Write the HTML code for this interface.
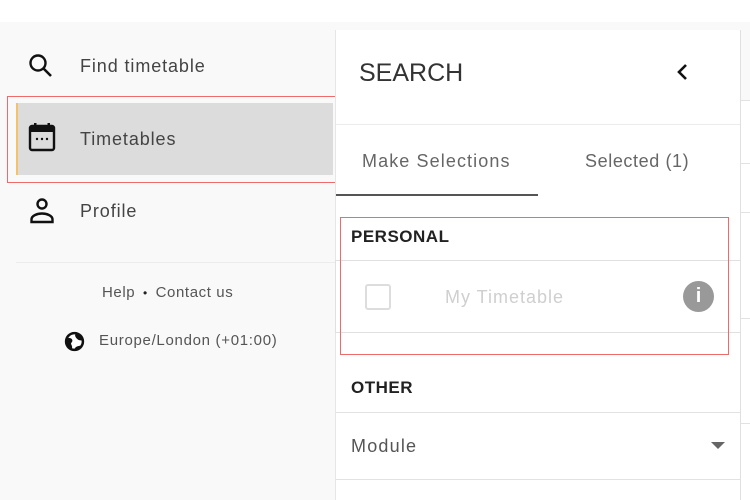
<!DOCTYPE html>
<html><head><meta charset="utf-8"><style>
*{margin:0;padding:0;box-sizing:border-box}
body{width:750px;height:500px;overflow:hidden;background:#fff;font-family:"Liberation Sans",sans-serif;position:relative}
.a{position:absolute;white-space:nowrap}
.side{left:16px;top:22px;width:319px;height:478px;background:#f9f9f9}
.nav{font-size:18px;color:#444;letter-spacing:0.9px}
.line{background:#e2e2e2;height:1px}
.panel{left:335px;top:30px;width:406px;height:470px;background:#fff;border-left:1px solid #e6e6e6;border-right:1px solid #e0e0e0}
</style></head><body>
<div class="a" style="left:0;top:22px;width:750px;height:478px;background:#f9f9f9"></div>
<div class="a side"></div>
<div class="a" style="left:741px;top:100px;width:9px;height:400px;background:#fff"></div>
<div class="a line" style="left:741px;top:100px;width:9px"></div>
<div class="a line" style="left:741px;top:163px;width:9px"></div>
<div class="a line" style="left:741px;top:212px;width:9px"></div>
<div class="a line" style="left:741px;top:318px;width:9px"></div>
<div class="a line" style="left:741px;top:423px;width:9px"></div>

<svg class="a" style="left:28px;top:53px" width="26" height="26" viewBox="0 0 26 26"><circle cx="10" cy="10" r="7.5" fill="none" stroke="#111" stroke-width="2.4"/><path d="M15.5 15.5L23 23" stroke="#111" stroke-width="2.6"/></svg>
<div class="a nav" style="left:80px;top:56px">Find timetable</div>

<div class="a" style="left:16px;top:103px;width:317px;height:72px;background:#dcdcdc;border-left:2px solid #f3c26b"></div>
<svg class="a" style="left:28px;top:122px" width="28" height="32" viewBox="0 0 28 32"><rect x="2" y="4" width="24" height="24" rx="2" fill="none" stroke="#111" stroke-width="2.4"/><rect x="2" y="4" width="24" height="6" fill="#111"/><rect x="6" y="1" width="2.5" height="5" fill="#111"/><rect x="19.5" y="1" width="2.5" height="5" fill="#111"/><circle cx="9" cy="17" r="1.2" fill="#111"/><circle cx="14" cy="17" r="1.2" fill="#111"/><circle cx="19" cy="17" r="1.2" fill="#111"/></svg>
<div class="a nav" style="left:80px;top:129px">Timetables</div>
<div class="a" style="left:7px;top:96px;width:336px;height:87px;border:1px solid #ef6b6b"></div>

<svg class="a" style="left:29px;top:197px" width="26" height="28" viewBox="0 0 26 28"><circle cx="13" cy="7" r="4.5" fill="none" stroke="#111" stroke-width="2.4"/><path d="M2.5 25v-2.5c0-4 6-6 10.5-6s10.5 2 10.5 6V25z" fill="none" stroke="#111" stroke-width="2.4"/></svg>
<div class="a nav" style="left:80px;top:201px">Profile</div>

<div class="a line" style="left:16px;top:262px;width:319px;background:#ececec"></div>
<div class="a" style="left:102px;top:284px;font-size:15px;color:#555;letter-spacing:0.6px">Help <span style="font-size:12px;color:#222;margin:0 3px">•</span> Contact us</div>
<svg class="a" style="left:64px;top:331px" width="21" height="21" viewBox="0 0 20 20"><circle cx="10" cy="10" r="8" fill="#fff" stroke="#111" stroke-width="2.4"/><path d="M3 7c2-1 5 0 5 2s-2 2-1 4 1 3 0 5C4 16 2 12 3 7zM11 3c3 0 6 3 6 6-3 0-4-1-5-2s-2-3-1-4zM10 17c1-2 3-3 6-3-1 2-3 3-6 3z" fill="#111"/></svg>
<div class="a" style="left:99px;top:332px;font-size:15px;color:#555;letter-spacing:0.7px">Europe/London (+01:00)</div>

<div class="a panel"></div>
<div class="a" style="left:359px;top:59px;font-size:25px;color:#333">SEARCH</div>
<svg class="a" style="left:675px;top:63px" width="14" height="18" viewBox="0 0 14 18"><path d="M11 2L4 9l7 7" fill="none" stroke="#111" stroke-width="2.6"/></svg>
<div class="a line" style="left:336px;top:124px;width:404px;background:#ececec"></div>
<div class="a" style="left:362px;top:151px;font-size:18px;color:#666;letter-spacing:1.1px">Make Selections</div>
<div class="a" style="left:585px;top:151px;font-size:18px;color:#666;letter-spacing:0.6px">Selected (1)</div>
<div class="a" style="left:336px;top:194px;width:202px;height:2px;background:#555"></div>

<div class="a" style="left:351px;top:227px;font-size:17px;font-weight:bold;color:#222;letter-spacing:0.5px">PERSONAL</div>
<div class="a" style="left:335px;top:260px;width:406px;height:73px;border:1px solid #e0e0e0;border-right:none"></div>
<div class="a" style="left:365px;top:284px;width:26px;height:26px;border:2px solid #ddd;border-radius:3px"></div>
<div class="a" style="left:445px;top:287px;font-size:18px;color:#cfcfcf;letter-spacing:1px">My Timetable</div>
<div class="a" style="left:683px;top:281px;width:31px;height:31px;border-radius:50%;background:#999;color:#fff;font-weight:bold;font-size:20px;text-align:center;line-height:31px">i</div>
<div class="a" style="left:340px;top:217px;width:389px;height:138px;border:1px solid #ef6b6b"></div>

<div class="a" style="left:351px;top:378px;font-size:17px;font-weight:bold;color:#222;letter-spacing:0.5px">OTHER</div>
<div class="a line" style="left:336px;top:412px;width:404px"></div>
<div class="a" style="left:351px;top:436px;font-size:18px;color:#555;letter-spacing:1.2px">Module</div>
<div class="a" style="left:711px;top:442px;width:0;height:0;border-left:7px solid transparent;border-right:7px solid transparent;border-top:7px solid #666"></div>
<div class="a line" style="left:336px;top:479px;width:404px"></div>
</body></html>
